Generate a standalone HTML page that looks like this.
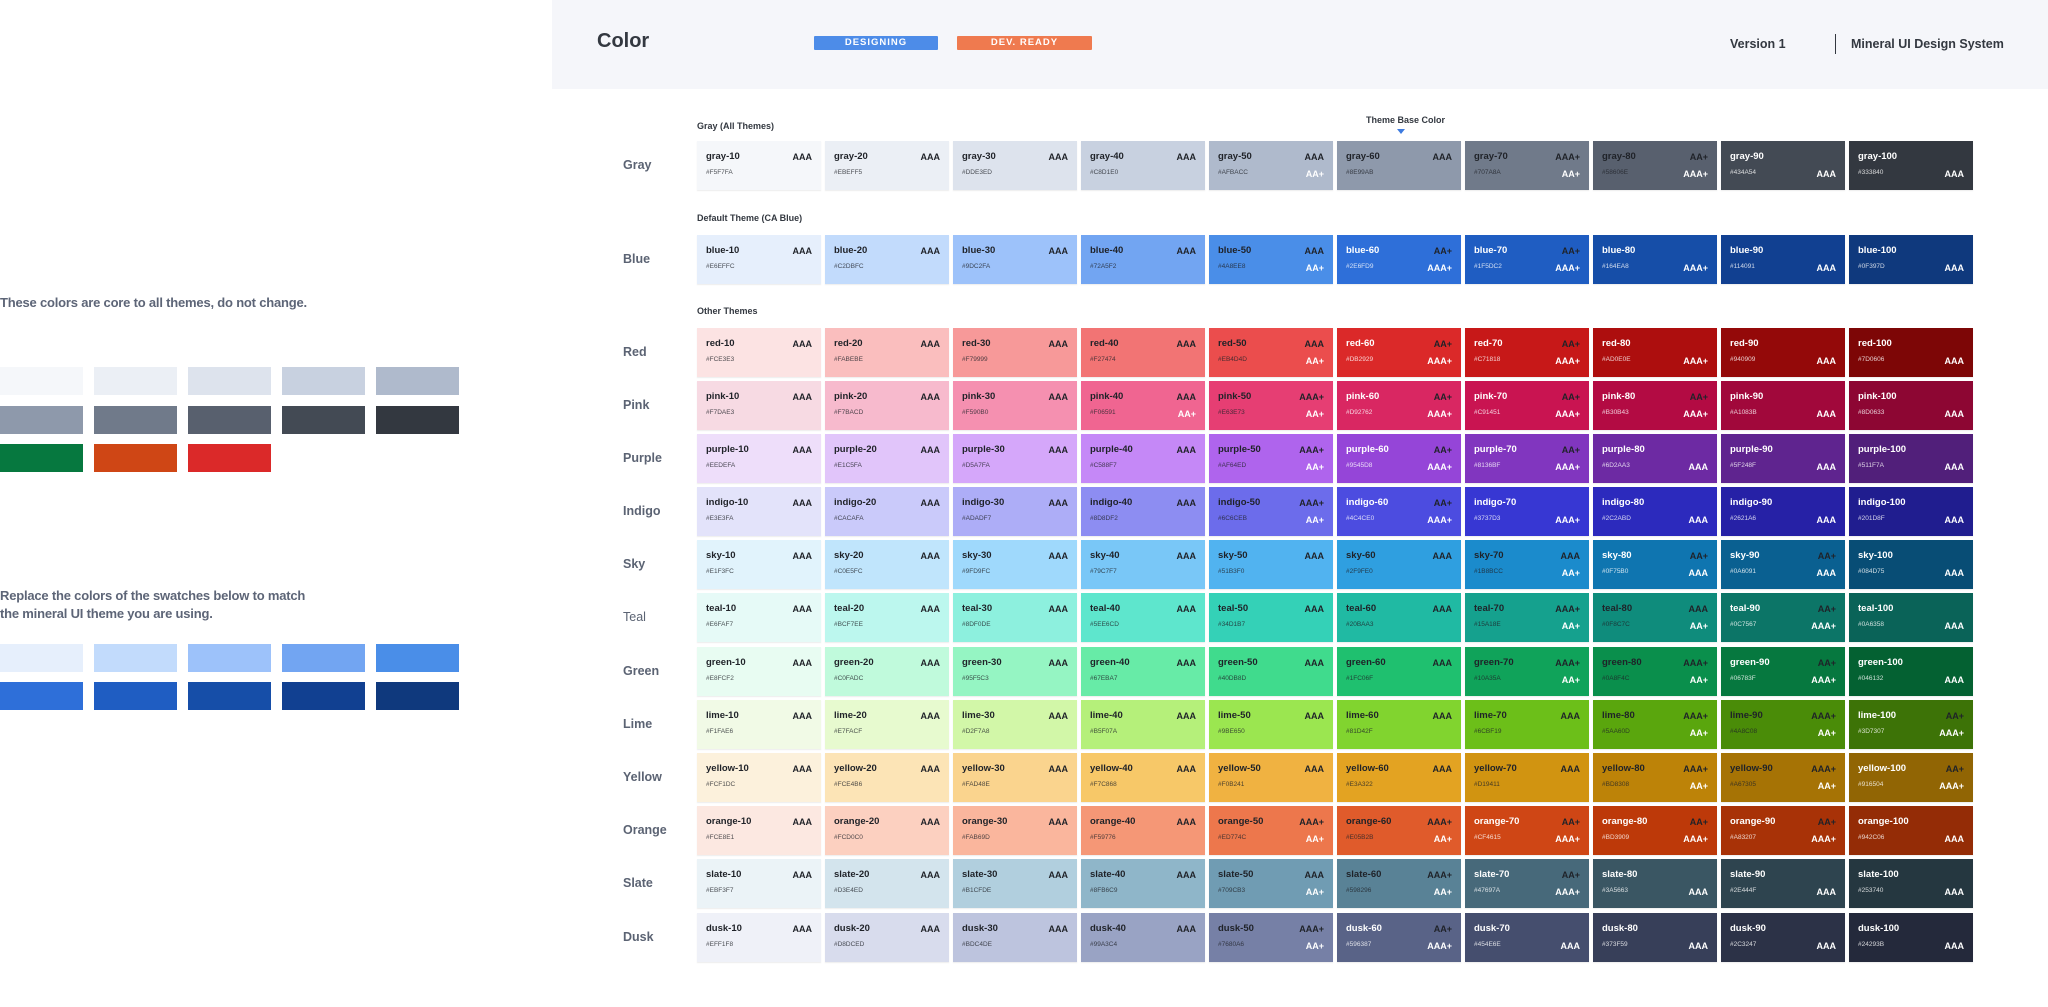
<!DOCTYPE html>
<html><head><meta charset="utf-8"><style>
*{margin:0;padding:0;box-sizing:border-box}
body{width:2048px;height:1007px;background:#fff;position:relative;overflow:hidden;font-family:"Liberation Sans",sans-serif;color:#333840}
.hdr{position:absolute;left:552px;top:0;width:1496px;height:89px;background:#f5f6fa}
.a{position:absolute;white-space:nowrap}
.badge{position:absolute;top:36px;height:14px;color:#fff;font-size:9.5px;font-weight:bold;letter-spacing:1px;text-align:center;line-height:14px;border-radius:1px}
.note{position:absolute;left:0;font-size:13px;font-weight:bold;color:#5d6577;letter-spacing:-0.2px;line-height:18px}
.ls{position:absolute;width:83px;height:28px}
.sec{position:absolute;left:697px;font-size:9px;font-weight:bold;color:#333840}
.lab{position:absolute;left:623px;font-size:12.5px;font-weight:bold;color:#5b6373}
.row{position:absolute;left:697px;display:flex;gap:4px}
.s{position:relative;width:124px;height:49px;box-shadow:0 1px 1px rgba(0,0,0,.08)}
.s b{position:absolute;left:9px;top:10px;font-size:9.5px;font-weight:bold}
.s i{position:absolute;left:9px;top:28px;font-size:6.5px;font-style:normal;opacity:.8}
.s u{position:absolute;right:9px;text-decoration:none;font-size:9px;font-weight:bold}
.s u.t{top:11px}.s u.b{top:28px}
.d b,.d i{color:#1f2228}.w b,.w i{color:#fff}
.k{color:#1f2228}.v{color:#fff}
</style></head><body>
<div class="hdr"></div>
<div class="a" style="left:597px;top:30px;font-size:20px;font-weight:bold;color:#333840">Color</div>
<div class="badge" style="left:814px;width:124px;background:#4d8ce8">DESIGNING</div>
<div class="badge" style="left:957px;width:135px;background:#ef7a4f">DEV. READY</div>
<div class="a" style="left:1730px;top:37px;font-size:12.5px;font-weight:bold">Version 1</div>
<div class="a" style="left:1835px;top:34px;width:1px;height:20px;background:#333840"></div>
<div class="a" style="left:1851px;top:37px;font-size:12.5px;font-weight:bold">Mineral UI Design System</div>

<div class="note" style="top:294px">These colors are core to all themes, do not change.</div>
<div class="ls" style="left:0;top:367px;background:#F5F7FA"></div><div class="ls" style="left:94px;top:367px;background:#EBEFF5"></div><div class="ls" style="left:188px;top:367px;background:#DDE3ED"></div><div class="ls" style="left:282px;top:367px;background:#C8D1E0"></div><div class="ls" style="left:376px;top:367px;background:#AFBACC"></div>
<div class="ls" style="left:0;top:406px;background:#8E99AB"></div><div class="ls" style="left:94px;top:406px;background:#707A8A"></div><div class="ls" style="left:188px;top:406px;background:#58606E"></div><div class="ls" style="left:282px;top:406px;background:#434A54"></div><div class="ls" style="left:376px;top:406px;background:#333840"></div>
<div class="ls" style="left:0;top:444px;background:#06783F"></div><div class="ls" style="left:94px;top:444px;background:#CF4615"></div><div class="ls" style="left:188px;top:444px;background:#DB2929"></div>
<div class="note" style="top:587px">Replace the colors of the swatches below to match<br>the mineral UI theme you are using.</div>
<div class="ls" style="left:0;top:644px;background:#E6EFFC"></div><div class="ls" style="left:94px;top:644px;background:#C2DBFC"></div><div class="ls" style="left:188px;top:644px;background:#9DC2FA"></div><div class="ls" style="left:282px;top:644px;background:#72A5F2"></div><div class="ls" style="left:376px;top:644px;background:#4A8EE8"></div>
<div class="ls" style="left:0;top:682px;background:#2E6FD9"></div><div class="ls" style="left:94px;top:682px;background:#1F5DC2"></div><div class="ls" style="left:188px;top:682px;background:#164EA8"></div><div class="ls" style="left:282px;top:682px;background:#114091"></div><div class="ls" style="left:376px;top:682px;background:#0F397D"></div>

<div class="sec" style="top:121px">Gray (All Themes)</div>
<div class="sec" style="top:213px">Default Theme (CA Blue)</div>
<div class="sec" style="top:306px">Other Themes</div>
<div class="a" style="left:1366px;top:115px;font-size:9px;font-weight:bold;width:70px;text-align:center">Theme Base Color</div>
<svg class="a" style="left:1396px;top:129px" width="10" height="6"><path d="M1 0H9L5 5Z" fill="#3d7be0"/></svg>

<div class="lab" style="top:158px">Gray</div>
<div class="row" style="top:141px">
<div class="s d" style="background:#F5F7FA"><b>gray-10</b><i>#F5F7FA</i><u class="t k">AAA</u></div>
<div class="s d" style="background:#EBEFF5"><b>gray-20</b><i>#EBEFF5</i><u class="t k">AAA</u></div>
<div class="s d" style="background:#DDE3ED"><b>gray-30</b><i>#DDE3ED</i><u class="t k">AAA</u></div>
<div class="s d" style="background:#C8D1E0"><b>gray-40</b><i>#C8D1E0</i><u class="t k">AAA</u></div>
<div class="s d" style="background:#AFBACC"><b>gray-50</b><i>#AFBACC</i><u class="t k">AAA</u><u class="b v">AA+</u></div>
<div class="s d" style="background:#8E99AB"><b>gray-60</b><i>#8E99AB</i><u class="t k">AAA</u></div>
<div class="s d" style="background:#707A8A"><b>gray-70</b><i>#707A8A</i><u class="t k">AAA+</u><u class="b v">AA+</u></div>
<div class="s d" style="background:#58606E"><b>gray-80</b><i>#58606E</i><u class="t k">AA+</u><u class="b v">AAA+</u></div>
<div class="s w" style="background:#434A54"><b>gray-90</b><i>#434A54</i><u class="b v">AAA</u></div>
<div class="s w" style="background:#333840"><b>gray-100</b><i>#333840</i><u class="b v">AAA</u></div>
</div>

<div class="lab" style="top:252px">Blue</div>
<div class="row" style="top:235px">
<div class="s d" style="background:#E6EFFC"><b>blue-10</b><i>#E6EFFC</i><u class="t k">AAA</u></div>
<div class="s d" style="background:#C2DBFC"><b>blue-20</b><i>#C2DBFC</i><u class="t k">AAA</u></div>
<div class="s d" style="background:#9DC2FA"><b>blue-30</b><i>#9DC2FA</i><u class="t k">AAA</u></div>
<div class="s d" style="background:#72A5F2"><b>blue-40</b><i>#72A5F2</i><u class="t k">AAA</u></div>
<div class="s d" style="background:#4A8EE8"><b>blue-50</b><i>#4A8EE8</i><u class="t k">AAA</u><u class="b v">AA+</u></div>
<div class="s w" style="background:#2E6FD9"><b>blue-60</b><i>#2E6FD9</i><u class="t k">AA+</u><u class="b v">AAA+</u></div>
<div class="s w" style="background:#1F5DC2"><b>blue-70</b><i>#1F5DC2</i><u class="t k">AA+</u><u class="b v">AAA+</u></div>
<div class="s w" style="background:#164EA8"><b>blue-80</b><i>#164EA8</i><u class="b v">AAA+</u></div>
<div class="s w" style="background:#114091"><b>blue-90</b><i>#114091</i><u class="b v">AAA</u></div>
<div class="s w" style="background:#0F397D"><b>blue-100</b><i>#0F397D</i><u class="b v">AAA</u></div>
</div>

<div class="lab" style="top:345px">Red</div>
<div class="row" style="top:328px">
<div class="s d" style="background:#FCE3E3"><b>red-10</b><i>#FCE3E3</i><u class="t k">AAA</u></div>
<div class="s d" style="background:#FABEBE"><b>red-20</b><i>#FABEBE</i><u class="t k">AAA</u></div>
<div class="s d" style="background:#F79999"><b>red-30</b><i>#F79999</i><u class="t k">AAA</u></div>
<div class="s d" style="background:#F27474"><b>red-40</b><i>#F27474</i><u class="t k">AAA</u></div>
<div class="s d" style="background:#EB4D4D"><b>red-50</b><i>#EB4D4D</i><u class="t k">AAA</u><u class="b v">AA+</u></div>
<div class="s w" style="background:#DB2929"><b>red-60</b><i>#DB2929</i><u class="t k">AA+</u><u class="b v">AAA+</u></div>
<div class="s w" style="background:#C71818"><b>red-70</b><i>#C71818</i><u class="t k">AA+</u><u class="b v">AAA+</u></div>
<div class="s w" style="background:#AD0E0E"><b>red-80</b><i>#AD0E0E</i><u class="b v">AAA+</u></div>
<div class="s w" style="background:#940909"><b>red-90</b><i>#940909</i><u class="b v">AAA</u></div>
<div class="s w" style="background:#7D0606"><b>red-100</b><i>#7D0606</i><u class="b v">AAA</u></div>
</div>

<div class="lab" style="top:398px">Pink</div>
<div class="row" style="top:381px">
<div class="s d" style="background:#F7DAE3"><b>pink-10</b><i>#F7DAE3</i><u class="t k">AAA</u></div>
<div class="s d" style="background:#F7BACD"><b>pink-20</b><i>#F7BACD</i><u class="t k">AAA</u></div>
<div class="s d" style="background:#F590B0"><b>pink-30</b><i>#F590B0</i><u class="t k">AAA</u></div>
<div class="s d" style="background:#F06591"><b>pink-40</b><i>#F06591</i><u class="t k">AAA</u><u class="b v">AA+</u></div>
<div class="s d" style="background:#E63E73"><b>pink-50</b><i>#E63E73</i><u class="t k">AAA+</u><u class="b v">AA+</u></div>
<div class="s w" style="background:#D92762"><b>pink-60</b><i>#D92762</i><u class="t k">AA+</u><u class="b v">AAA+</u></div>
<div class="s w" style="background:#C91451"><b>pink-70</b><i>#C91451</i><u class="t k">AA+</u><u class="b v">AAA+</u></div>
<div class="s w" style="background:#B30B43"><b>pink-80</b><i>#B30B43</i><u class="t k">AA+</u><u class="b v">AAA+</u></div>
<div class="s w" style="background:#A1083B"><b>pink-90</b><i>#A1083B</i><u class="b v">AAA</u></div>
<div class="s w" style="background:#8D0633"><b>pink-100</b><i>#8D0633</i><u class="b v">AAA</u></div>
</div>

<div class="lab" style="top:451px">Purple</div>
<div class="row" style="top:434px">
<div class="s d" style="background:#EEDEFA"><b>purple-10</b><i>#EEDEFA</i><u class="t k">AAA</u></div>
<div class="s d" style="background:#E1C5FA"><b>purple-20</b><i>#E1C5FA</i><u class="t k">AAA</u></div>
<div class="s d" style="background:#D5A7FA"><b>purple-30</b><i>#D5A7FA</i><u class="t k">AAA</u></div>
<div class="s d" style="background:#C588F7"><b>purple-40</b><i>#C588F7</i><u class="t k">AAA</u></div>
<div class="s d" style="background:#AF64ED"><b>purple-50</b><i>#AF64ED</i><u class="t k">AAA+</u><u class="b v">AA+</u></div>
<div class="s w" style="background:#9545D8"><b>purple-60</b><i>#9545D8</i><u class="t k">AA+</u><u class="b v">AAA+</u></div>
<div class="s w" style="background:#8136BF"><b>purple-70</b><i>#8136BF</i><u class="t k">AA+</u><u class="b v">AAA+</u></div>
<div class="s w" style="background:#6D2AA3"><b>purple-80</b><i>#6D2AA3</i><u class="b v">AAA</u></div>
<div class="s w" style="background:#5F248F"><b>purple-90</b><i>#5F248F</i><u class="b v">AAA</u></div>
<div class="s w" style="background:#511F7A"><b>purple-100</b><i>#511F7A</i><u class="b v">AAA</u></div>
</div>

<div class="lab" style="top:504px">Indigo</div>
<div class="row" style="top:487px">
<div class="s d" style="background:#E3E3FA"><b>indigo-10</b><i>#E3E3FA</i><u class="t k">AAA</u></div>
<div class="s d" style="background:#CACAFA"><b>indigo-20</b><i>#CACAFA</i><u class="t k">AAA</u></div>
<div class="s d" style="background:#ADADF7"><b>indigo-30</b><i>#ADADF7</i><u class="t k">AAA</u></div>
<div class="s d" style="background:#8D8DF2"><b>indigo-40</b><i>#8D8DF2</i><u class="t k">AAA</u></div>
<div class="s d" style="background:#6C6CEB"><b>indigo-50</b><i>#6C6CEB</i><u class="t k">AAA+</u><u class="b v">AA+</u></div>
<div class="s w" style="background:#4C4CE0"><b>indigo-60</b><i>#4C4CE0</i><u class="t k">AA+</u><u class="b v">AAA+</u></div>
<div class="s w" style="background:#3737D3"><b>indigo-70</b><i>#3737D3</i><u class="b v">AAA+</u></div>
<div class="s w" style="background:#2C2ABD"><b>indigo-80</b><i>#2C2ABD</i><u class="b v">AAA</u></div>
<div class="s w" style="background:#2621A6"><b>indigo-90</b><i>#2621A6</i><u class="b v">AAA</u></div>
<div class="s w" style="background:#201D8F"><b>indigo-100</b><i>#201D8F</i><u class="b v">AAA</u></div>
</div>

<div class="lab" style="top:557px">Sky</div>
<div class="row" style="top:540px">
<div class="s d" style="background:#E1F3FC"><b>sky-10</b><i>#E1F3FC</i><u class="t k">AAA</u></div>
<div class="s d" style="background:#C0E5FC"><b>sky-20</b><i>#C0E5FC</i><u class="t k">AAA</u></div>
<div class="s d" style="background:#9FD9FC"><b>sky-30</b><i>#9FD9FC</i><u class="t k">AAA</u></div>
<div class="s d" style="background:#79C7F7"><b>sky-40</b><i>#79C7F7</i><u class="t k">AAA</u></div>
<div class="s d" style="background:#51B3F0"><b>sky-50</b><i>#51B3F0</i><u class="t k">AAA</u></div>
<div class="s d" style="background:#2F9FE0"><b>sky-60</b><i>#2F9FE0</i><u class="t k">AAA</u></div>
<div class="s d" style="background:#1B8BCC"><b>sky-70</b><i>#1B8BCC</i><u class="t k">AAA</u><u class="b v">AA+</u></div>
<div class="s w" style="background:#0F75B0"><b>sky-80</b><i>#0F75B0</i><u class="t k">AA+</u><u class="b v">AAA</u></div>
<div class="s w" style="background:#0A6091"><b>sky-90</b><i>#0A6091</i><u class="t k">AA+</u><u class="b v">AAA</u></div>
<div class="s w" style="background:#084D75"><b>sky-100</b><i>#084D75</i><u class="b v">AAA</u></div>
</div>

<div class="lab" style="top:610px;font-weight:normal">Teal</div>
<div class="row" style="top:593px">
<div class="s d" style="background:#E6FAF7"><b>teal-10</b><i>#E6FAF7</i><u class="t k">AAA</u></div>
<div class="s d" style="background:#BCF7EE"><b>teal-20</b><i>#BCF7EE</i><u class="t k">AAA</u></div>
<div class="s d" style="background:#8DF0DE"><b>teal-30</b><i>#8DF0DE</i><u class="t k">AAA</u></div>
<div class="s d" style="background:#5EE6CD"><b>teal-40</b><i>#5EE6CD</i><u class="t k">AAA</u></div>
<div class="s d" style="background:#34D1B7"><b>teal-50</b><i>#34D1B7</i><u class="t k">AAA</u></div>
<div class="s d" style="background:#20BAA3"><b>teal-60</b><i>#20BAA3</i><u class="t k">AAA</u></div>
<div class="s d" style="background:#15A18E"><b>teal-70</b><i>#15A18E</i><u class="t k">AAA+</u><u class="b v">AA+</u></div>
<div class="s d" style="background:#0F8C7C"><b>teal-80</b><i>#0F8C7C</i><u class="t k">AAA</u><u class="b v">AA+</u></div>
<div class="s w" style="background:#0C7567"><b>teal-90</b><i>#0C7567</i><u class="t k">AA+</u><u class="b v">AAA+</u></div>
<div class="s w" style="background:#0A6358"><b>teal-100</b><i>#0A6358</i><u class="b v">AAA</u></div>
</div>

<div class="lab" style="top:664px">Green</div>
<div class="row" style="top:647px">
<div class="s d" style="background:#E8FCF2"><b>green-10</b><i>#E8FCF2</i><u class="t k">AAA</u></div>
<div class="s d" style="background:#C0FADC"><b>green-20</b><i>#C0FADC</i><u class="t k">AAA</u></div>
<div class="s d" style="background:#95F5C3"><b>green-30</b><i>#95F5C3</i><u class="t k">AAA</u></div>
<div class="s d" style="background:#67EBA7"><b>green-40</b><i>#67EBA7</i><u class="t k">AAA</u></div>
<div class="s d" style="background:#40DB8D"><b>green-50</b><i>#40DB8D</i><u class="t k">AAA</u></div>
<div class="s d" style="background:#1FC06F"><b>green-60</b><i>#1FC06F</i><u class="t k">AAA</u></div>
<div class="s d" style="background:#10A35A"><b>green-70</b><i>#10A35A</i><u class="t k">AAA+</u><u class="b v">AA+</u></div>
<div class="s d" style="background:#0A8F4C"><b>green-80</b><i>#0A8F4C</i><u class="t k">AAA+</u><u class="b v">AA+</u></div>
<div class="s w" style="background:#06783F"><b>green-90</b><i>#06783F</i><u class="t k">AA+</u><u class="b v">AAA+</u></div>
<div class="s w" style="background:#046132"><b>green-100</b><i>#046132</i><u class="b v">AAA</u></div>
</div>

<div class="lab" style="top:717px">Lime</div>
<div class="row" style="top:700px">
<div class="s d" style="background:#F1FAE6"><b>lime-10</b><i>#F1FAE6</i><u class="t k">AAA</u></div>
<div class="s d" style="background:#E7FACF"><b>lime-20</b><i>#E7FACF</i><u class="t k">AAA</u></div>
<div class="s d" style="background:#D2F7A8"><b>lime-30</b><i>#D2F7A8</i><u class="t k">AAA</u></div>
<div class="s d" style="background:#B5F07A"><b>lime-40</b><i>#B5F07A</i><u class="t k">AAA</u></div>
<div class="s d" style="background:#9BE650"><b>lime-50</b><i>#9BE650</i><u class="t k">AAA</u></div>
<div class="s d" style="background:#81D42F"><b>lime-60</b><i>#81D42F</i><u class="t k">AAA</u></div>
<div class="s d" style="background:#6CBF19"><b>lime-70</b><i>#6CBF19</i><u class="t k">AAA</u></div>
<div class="s d" style="background:#5AA60D"><b>lime-80</b><i>#5AA60D</i><u class="t k">AAA+</u><u class="b v">AA+</u></div>
<div class="s d" style="background:#4A8C08"><b>lime-90</b><i>#4A8C08</i><u class="t k">AAA+</u><u class="b v">AA+</u></div>
<div class="s w" style="background:#3D7307"><b>lime-100</b><i>#3D7307</i><u class="t k">AA+</u><u class="b v">AAA+</u></div>
</div>

<div class="lab" style="top:770px">Yellow</div>
<div class="row" style="top:753px">
<div class="s d" style="background:#FCF1DC"><b>yellow-10</b><i>#FCF1DC</i><u class="t k">AAA</u></div>
<div class="s d" style="background:#FCE4B6"><b>yellow-20</b><i>#FCE4B6</i><u class="t k">AAA</u></div>
<div class="s d" style="background:#FAD48E"><b>yellow-30</b><i>#FAD48E</i><u class="t k">AAA</u></div>
<div class="s d" style="background:#F7C868"><b>yellow-40</b><i>#F7C868</i><u class="t k">AAA</u></div>
<div class="s d" style="background:#F0B241"><b>yellow-50</b><i>#F0B241</i><u class="t k">AAA</u></div>
<div class="s d" style="background:#E3A322"><b>yellow-60</b><i>#E3A322</i><u class="t k">AAA</u></div>
<div class="s d" style="background:#D19411"><b>yellow-70</b><i>#D19411</i><u class="t k">AAA</u></div>
<div class="s d" style="background:#BD8308"><b>yellow-80</b><i>#BD8308</i><u class="t k">AAA+</u><u class="b v">AA+</u></div>
<div class="s d" style="background:#A67305"><b>yellow-90</b><i>#A67305</i><u class="t k">AAA+</u><u class="b v">AA+</u></div>
<div class="s w" style="background:#916504"><b>yellow-100</b><i>#916504</i><u class="t k">AA+</u><u class="b v">AAA+</u></div>
</div>

<div class="lab" style="top:823px">Orange</div>
<div class="row" style="top:806px">
<div class="s d" style="background:#FCE8E1"><b>orange-10</b><i>#FCE8E1</i><u class="t k">AAA</u></div>
<div class="s d" style="background:#FCD0C0"><b>orange-20</b><i>#FCD0C0</i><u class="t k">AAA</u></div>
<div class="s d" style="background:#FAB69D"><b>orange-30</b><i>#FAB69D</i><u class="t k">AAA</u></div>
<div class="s d" style="background:#F59776"><b>orange-40</b><i>#F59776</i><u class="t k">AAA</u></div>
<div class="s d" style="background:#ED774C"><b>orange-50</b><i>#ED774C</i><u class="t k">AAA+</u><u class="b v">AA+</u></div>
<div class="s d" style="background:#E05B2B"><b>orange-60</b><i>#E05B2B</i><u class="t k">AAA+</u><u class="b v">AA+</u></div>
<div class="s w" style="background:#CF4615"><b>orange-70</b><i>#CF4615</i><u class="t k">AA+</u><u class="b v">AAA+</u></div>
<div class="s w" style="background:#BD3909"><b>orange-80</b><i>#BD3909</i><u class="t k">AA+</u><u class="b v">AAA+</u></div>
<div class="s w" style="background:#A83207"><b>orange-90</b><i>#A83207</i><u class="t k">AA+</u><u class="b v">AAA+</u></div>
<div class="s w" style="background:#942C06"><b>orange-100</b><i>#942C06</i><u class="b v">AAA</u></div>
</div>

<div class="lab" style="top:876px">Slate</div>
<div class="row" style="top:859px">
<div class="s d" style="background:#EBF3F7"><b>slate-10</b><i>#EBF3F7</i><u class="t k">AAA</u></div>
<div class="s d" style="background:#D3E4ED"><b>slate-20</b><i>#D3E4ED</i><u class="t k">AAA</u></div>
<div class="s d" style="background:#B1CFDE"><b>slate-30</b><i>#B1CFDE</i><u class="t k">AAA</u></div>
<div class="s d" style="background:#8FB6C9"><b>slate-40</b><i>#8FB6C9</i><u class="t k">AAA</u></div>
<div class="s d" style="background:#709CB3"><b>slate-50</b><i>#709CB3</i><u class="t k">AAA</u><u class="b v">AA+</u></div>
<div class="s d" style="background:#598296"><b>slate-60</b><i>#598296</i><u class="t k">AAA+</u><u class="b v">AA+</u></div>
<div class="s w" style="background:#47697A"><b>slate-70</b><i>#47697A</i><u class="t k">AA+</u><u class="b v">AAA+</u></div>
<div class="s w" style="background:#3A5663"><b>slate-80</b><i>#3A5663</i><u class="b v">AAA</u></div>
<div class="s w" style="background:#2E444F"><b>slate-90</b><i>#2E444F</i><u class="b v">AAA</u></div>
<div class="s w" style="background:#253740"><b>slate-100</b><i>#253740</i><u class="b v">AAA</u></div>
</div>

<div class="lab" style="top:930px">Dusk</div>
<div class="row" style="top:913px">
<div class="s d" style="background:#EFF1F8"><b>dusk-10</b><i>#EFF1F8</i><u class="t k">AAA</u></div>
<div class="s d" style="background:#D8DCED"><b>dusk-20</b><i>#D8DCED</i><u class="t k">AAA</u></div>
<div class="s d" style="background:#BDC4DE"><b>dusk-30</b><i>#BDC4DE</i><u class="t k">AAA</u></div>
<div class="s d" style="background:#99A3C4"><b>dusk-40</b><i>#99A3C4</i><u class="t k">AAA</u></div>
<div class="s d" style="background:#7680A6"><b>dusk-50</b><i>#7680A6</i><u class="t k">AAA+</u><u class="b v">AA+</u></div>
<div class="s w" style="background:#596387"><b>dusk-60</b><i>#596387</i><u class="t k">AA+</u><u class="b v">AAA+</u></div>
<div class="s w" style="background:#454E6E"><b>dusk-70</b><i>#454E6E</i><u class="b v">AAA</u></div>
<div class="s w" style="background:#373F59"><b>dusk-80</b><i>#373F59</i><u class="b v">AAA</u></div>
<div class="s w" style="background:#2C3247"><b>dusk-90</b><i>#2C3247</i><u class="b v">AAA</u></div>
<div class="s w" style="background:#24293B"><b>dusk-100</b><i>#24293B</i><u class="b v">AAA</u></div>
</div>
</body></html>
